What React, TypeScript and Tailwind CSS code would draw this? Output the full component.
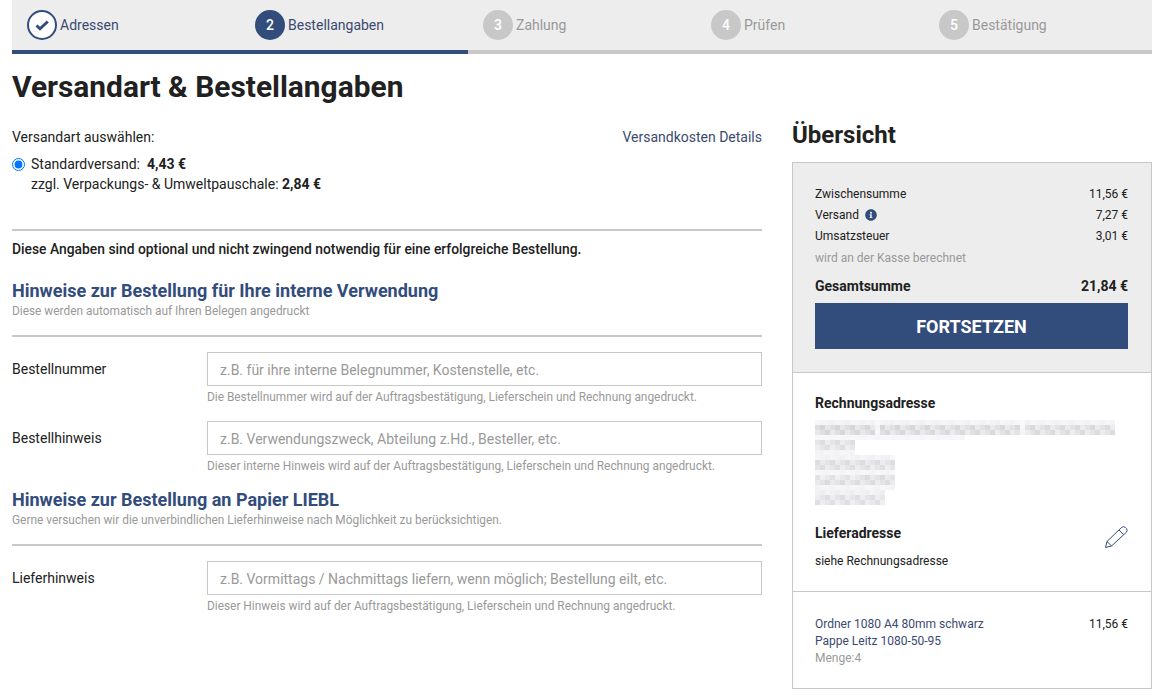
import type { ReactNode } from 'react'
import { FaInfoCircle } from 'react-icons/fa'

const steps = [
  { n: '2', label: 'Bestellangaben', active: true },
  { n: '3', label: 'Zahlung' },
  { n: '4', label: 'Prüfen' },
  { n: '5', label: 'Bestätigung' },
]

function Stepper() {
  return (
    <div className="relative flex h-[54px] border-b-4 border-[#c8c8c8] bg-[#ededed]">
      <div className="absolute bottom-[-4px] left-0 h-1 w-[456px] bg-[#324c7b]" />
      <div className="flex w-[228px] items-center pl-[15px]">
        <span className="flex h-[30px] w-[30px] items-center justify-center rounded-full border-2 border-[#324c7b] bg-white">
          <svg viewBox="0 0 14 11" className="h-[11px] w-[14px]" fill="none" stroke="#324c7b" strokeWidth="3">
            <path d="M1.5 5.5 5 8.8 12.8 1.5" />
          </svg>
        </span>
        <span className="ml-[3px] text-sm text-[#3b4a70]">Adressen</span>
      </div>
      {steps.map((s) => (
        <div key={s.n} className="flex w-[228px] items-center pl-[15px]">
          <span
            className={`flex h-[30px] w-[30px] items-center justify-center rounded-full text-sm font-medium text-white ${
              s.active ? 'bg-[#324c7b]' : 'bg-[#c8c8c8]'
            }`}
          >
            {s.n}
          </span>
          <span className={`ml-[3px] text-sm ${s.active ? 'text-[#3b4a70]' : 'text-[#999]'}`}>{s.label}</span>
        </div>
      ))}
    </div>
  )
}

function Field({ label, placeholder, hint }: { label: string; placeholder: string; hint: string }) {
  return (
    <div className="flex">
      <label className="w-[195px] pt-[7px] text-sm leading-5 text-[#212121]">{label}</label>
      <div className="flex-1">
        <input
          readOnly
          placeholder={placeholder}
          className="block h-[34px] w-full border border-[#c8c8c8] bg-white px-3 pt-[2px] text-sm placeholder:text-[#999]"
        />
        <p className="mt-[2px] text-[11.88px] leading-[18px] text-[#999]">{hint}</p>
      </div>
    </div>
  )
}

function Row({ label, value, children }: { label: string; value: string; children?: ReactNode }) {
  return (
    <div className="flex h-[21px] items-center justify-between text-xs text-[#212121]">
      <span className="flex items-center gap-[6px]">
        {label}
        {children}
      </span>
      <span>{value}</span>
    </div>
  )
}

// pixelated address block: [first row, row count, width, darkness]
const mosaicBands = [
  [0, 1, 300, 0.25],
  [1, 2, 300, 1],
  [3, 1, 150, 0.12],
  [4, 2, 36, 0.9],
  [6, 1, 36, 0.2],
  [7, 1, 76, 0.25],
  [8, 2, 76, 0.85],
  [10, 1, 76, 0.2],
  [11, 2, 80, 0.8],
  [13, 1, 80, 0.2],
  [14, 1, 70, 0.35],
  [15, 2, 70, 0.85],
]

function Mosaic() {
  const cells: ReactNode[] = []
  mosaicBands.forEach(([row, count, width, dark]) => {
    for (let r = row; r < row + count; r++) {
      for (let x = 0; x < width; x += 5) {
        const noise = ((x * 7 + r * 13) * 2654435761) % 97
        const gap = r < 3 && (x === 60 || x === 205) ? 0.2 : 1
        const tone = Math.round(250 - (12 + (noise / 97) * 26) * dark * gap)
        cells.push(<rect key={`${r}-${x}`} x={x} y={r * 5} width="5" height="5" fill={`rgb(${tone},${tone},${tone + 3})`} />)
      }
    }
  })
  return (
    <svg width="300" height="85" shapeRendering="crispEdges" className="mt-[7px] block">
      {cells}
    </svg>
  )
}

export default function App() {
  return (
    <div className="min-h-[693px] bg-white px-3 font-['Roboto',sans-serif] text-[#212121]">
      <Stepper />
      <h1 className="mt-[14px] text-[29.9px] font-bold leading-[38px]">Versandart &amp; Bestellangaben</h1>

      <div className="mt-[13px] grid grid-cols-[750px_360px] gap-[30px]">
        <main>
          <div className="mt-[8px] flex justify-between text-sm leading-5">
            <span>Versandart auswählen:</span>
            <a className="text-[#3b4a70]">Versandkosten Details</a>
          </div>
          <div className="mt-[7px] flex text-sm leading-5">
            <input type="radio" readOnly checked className="mt-[4px] h-[13px] w-[13px] accent-[#0075ff]" />
            <div className="ml-[6px]">
              <div>
                Standardversand:&nbsp; <b className="font-bold">4,43 €</b>
              </div>
              <div>
                zzgl. Verpackungs- &amp; Umweltpauschale: <b className="font-bold">2,84 €</b>
              </div>
            </div>
          </div>

          <hr className="mt-[35px] border-t-2 border-[#c8c8c8]" />
          <p className="mt-[8px] text-[13.85px] font-medium leading-5">
            Diese Angaben sind optional und nicht zwingend notwendig für eine erfolgreiche Bestellung.
          </p>

          <h2 className="mt-[20px] text-lg font-bold leading-6 text-[#324c7b]">
            Hinweise zur Bestellung für Ihre interne Verwendung
          </h2>
          <p className="text-[11.88px] leading-4 text-[#999]">Diese werden automatisch auf Ihren Belegen angedruckt</p>
          <hr className="mb-[15px] mt-[16px] border-t-2 border-[#c8c8c8]" />

          <div className="flex flex-col gap-[15px]">
            <Field
              label="Bestellnummer"
              placeholder="z.B. für ihre interne Belegnummer, Kostenstelle, etc."
              hint="Die Bestellnummer wird auf der Auftragsbestätigung, Lieferschein und Rechnung angedruckt."
            />
            <Field
              label="Bestellhinweis"
              placeholder="z.B. Verwendungszweck, Abteilung z.Hd., Besteller, etc."
              hint="Dieser interne Hinweis wird auf der Auftragsbestätigung, Lieferschein und Rechnung angedruckt."
            />
          </div>

          <h2 className="mt-[13px] text-lg font-bold leading-6 text-[#324c7b]">Hinweise zur Bestellung an Papier LIEBL</h2>
          <p className="text-[11.88px] leading-4 text-[#999]">
            Gerne versuchen wir die unverbindlichen Lieferhinweise nach Möglichkeit zu berücksichtigen.
          </p>
          <hr className="mb-[15px] mt-[16px] border-t-2 border-[#c8c8c8]" />

          <Field
            label="Lieferhinweis"
            placeholder="z.B. Vormittags / Nachmittags liefern, wenn möglich; Bestellung eilt, etc."
            hint="Dieser Hinweis wird auf der Auftragsbestätigung, Lieferschein und Rechnung angedruckt."
          />
        </main>

        <aside>
          <h2 className="text-2xl font-bold leading-8">Übersicht</h2>
          <div className="mt-[11px] border border-[#c8c8c8]">
            <div className="border-b border-[#c8c8c8] bg-[#ededed] pb-[23px] pl-[22px] pr-[23px] pt-[20px]">
              <Row label="Zwischensumme" value="11,56 €" />
              <Row label="Versand" value="7,27 €">
                <FaInfoCircle size={12} className="text-[#324c7b]" />
              </Row>
              <Row label="Umsatzsteuer" value="3,01 €" />
              <p className="mt-[2px] text-xs leading-5 text-[#999]">wird an der Kasse berechnet</p>
              <div className="mt-[8px] flex justify-between text-sm font-bold leading-5">
                <span>Gesamtsumme</span>
                <span>21,84 €</span>
              </div>
              <button className="mt-[7px] block h-[46px] w-full bg-[#324c7b] pt-[2px] text-lg font-bold text-white">FORTSETZEN</button>
            </div>

            <div className="border-b border-[#c8c8c8] pb-[20px] pl-[22px] pr-[23px] pt-[20px]">
              <h3 className="text-sm font-bold leading-5">Rechnungsadresse</h3>
              <Mosaic />
              <div className="mt-[18px] flex items-start justify-between">
                <h3 className="text-sm font-bold leading-5">Lieferadresse</h3>
                <svg viewBox="0 0 24 24" className="mt-[2px] h-6 w-6" fill="none" stroke="#324c7b" strokeWidth="1">
                  <path d="M1.5 22.5 3 16.5 17.5 2.5Q19.5.8 21.5 2.5L22.5 3.5Q24 5.5 22.3 7.3L7.5 21Z" />
                  <path d="M3 16.5 7.5 21M15 5 19.8 9.8" />
                </svg>
              </div>
              <p className="mt-[2px] text-xs leading-5">siehe Rechnungsadresse</p>
            </div>

            <div className="flex justify-between pb-[21px] pl-[22px] pr-[23px] pt-[24px] text-xs leading-[17px]">
              <div>
                <div className="text-[#3b4a70]">Ordner 1080 A4 80mm schwarz</div>
                <div className="text-[#3b4a70]">Pappe Leitz 1080-50-95</div>
                <div className="text-[#999]">Menge:4</div>
              </div>
              <span>11,56 €</span>
            </div>
          </div>
        </aside>
      </div>
    </div>
  )
}
